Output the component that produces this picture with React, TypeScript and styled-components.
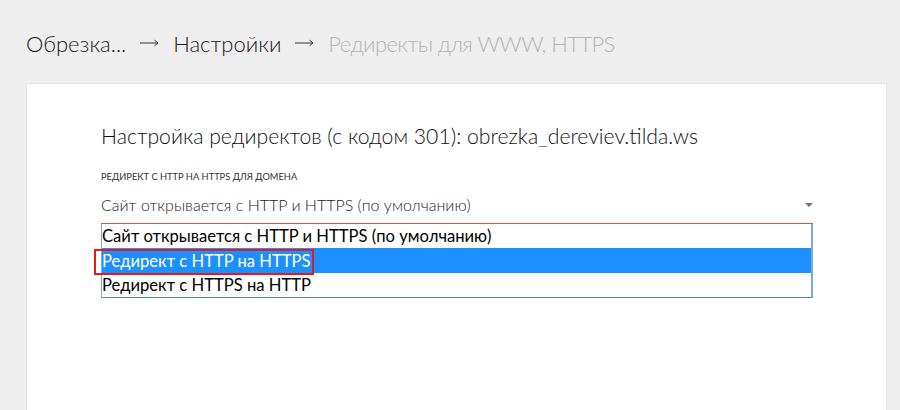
import React from "react";
import styled, { createGlobalStyle } from "styled-components";

const Global = createGlobalStyle`
  html, body { margin: 0; padding: 0; background: #eeeeee; }
  body { font-family: "Lato", "Liberation Sans", sans-serif; }
  * { box-sizing: border-box; }
`;

const Page = styled.div`
  width: 900px;
  height: 410px;
  overflow: hidden;
  background: #eeeeee;
  padding: 24px 13px 0 26px;
  display: flex;
  flex-direction: column;
`;

const Breadcrumbs = styled.div`
  display: flex;
  align-items: center;
  gap: 14px;
  height: 38px;
  font-size: 22px;
  font-weight: 300;
  margin-bottom: 21px;
`;

const Crumb = styled.span<{ $muted?: boolean }>`
  color: ${(p) => (p.$muted ? "#b5b5b5" : "#1a1a1a")};
  font-weight: 300;
  letter-spacing: ${(p) => (p.$muted ? "-0.6px" : "0")};
  white-space: nowrap;
`;

const Arrow = styled.svg`
  width: 19px;
  height: 8px;
  flex: none;
`;

const Card = styled.div`
  flex: 1;
  background: #fff;
  border: 1px solid #e2e2e2;
  border-bottom: none;
  padding: 37px 74px 0 74px;
`;

const Title = styled.h1`
  margin: 0 0 20px 0;
  font-size: 21.2px;
  font-weight: 300;
  color: #111;
  line-height: 30px;
  white-space: nowrap;
`;

const Label = styled.div`
  font-size: 9.3px;
  line-height: 12px;
  text-transform: uppercase;
  color: #333;
  margin-bottom: 7px;
`;

const SelectWrap = styled.div`
  width: 712px;
`;

const SelectBox = styled.div`
  display: flex;
  align-items: center;
  justify-content: space-between;
  height: 34px;
  padding: 0 0 4px 0;
  font-size: 16px;
  font-weight: 300;
  color: #222;
  border-bottom: 1px solid #d9573f;
`;

const Caret = styled.span`
  width: 0;
  height: 0;
  border-left: 4px solid transparent;
  border-right: 4px solid transparent;
  border-top: 4px solid #777;
`;

const List = styled.div`
  display: flex;
  flex-direction: column;
  border: 1px solid #7fa6e4;
  border-top: none;
  border-right-width: 2px;
  border-bottom-color: #4f7fcf;
`;

const Option = styled.div<{ $active?: boolean }>`
  position: relative;
  height: 24.4px;
  display: flex;
  align-items: center;
  padding: 0;
  font-size: 16.6px;
  font-weight: 400;
  color: ${(p) => (p.$active ? "#fff" : "#000")};
  background: ${(p) => (p.$active ? "#1e8fff" : "#fff")};
  white-space: nowrap;
`;

const Highlight = styled.div`
  position: absolute;
  z-index: 2;
  left: -8px;
  top: 1px;
  width: 220px;
  height: 26px;
  border: 2px solid #e21b1b;
  pointer-events: none;
`;

const ArrowIcon = () => (
  <Arrow viewBox="0 0 19 8">
    <path d="M0 4h17.5M14.5 1.2L18 4l-3.5 2.8" stroke="#333" strokeWidth="1" fill="none" />
  </Arrow>
);

export default function App() {
  return (
    <>
      <Global />
      <Page>
        <Breadcrumbs>
          <Crumb>Обрезка...</Crumb>
          <ArrowIcon />
          <Crumb>Настройки</Crumb>
          <ArrowIcon />
          <Crumb $muted>Редиректы для WWW, HTTPS</Crumb>
        </Breadcrumbs>
        <Card>
          <Title>Настройка редиректов (с кодом 301): obrezka_dereviev.tilda.ws</Title>
          <Label>Редирект с HTTP на HTTPS для домена</Label>
          <SelectWrap>
            <SelectBox>
              <span>Сайт открывается с HTTP и HTTPS (по умолчанию)</span>
              <Caret />
            </SelectBox>
            <List>
              <Option>Сайт открывается с HTTP и HTTPS (по умолчанию)</Option>
              <Option $active>
                Редирект с HTTP на HTTPS
                <Highlight />
              </Option>
              <Option>Редирект с HTTPS на HTTP</Option>
            </List>
          </SelectWrap>
        </Card>
      </Page>
    </>
  );
}
